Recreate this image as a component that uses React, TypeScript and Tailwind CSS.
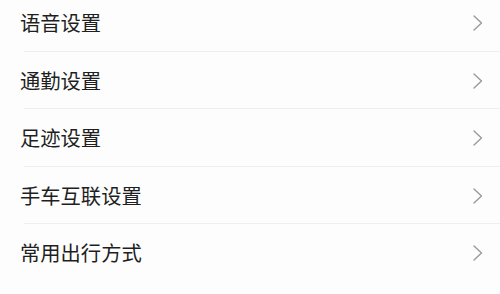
import React from "react";

const items = ["语音设置", "通勤设置", "足迹设置", "手车互联设置", "常用出行方式"];

export default function App() {
  return (
    <div
      className="w-[500px] h-[294px] overflow-hidden bg-[#fdfdfd]"
      style={{ fontFamily: '"Noto Sans CJK SC", "Noto Sans", sans-serif' }}
    >
      <div className="-mt-[6px] flex flex-col">
        {items.map((t, i) => (
          <div key={t} className="relative h-[57.5px] flex items-center justify-between pl-5 pr-4">
            <span className="text-[20.3px] leading-none text-[#1f1f1f] -mt-[1px]">{t}</span>
            <svg width="12" height="18" viewBox="0 0 12 18" className="mt-[1px]">
              <path d="M2 2 L9.5 9 L2 16" fill="none" stroke="#9a9a9a" strokeWidth="1.4" strokeLinecap="round" strokeLinejoin="round" />
            </svg>
            {i < items.length - 1 && (
              <div className="absolute left-6 right-0 bottom-0 h-px bg-[#eeeeee]" />
            )}
          </div>
        ))}
      </div>
    </div>
  );
}
